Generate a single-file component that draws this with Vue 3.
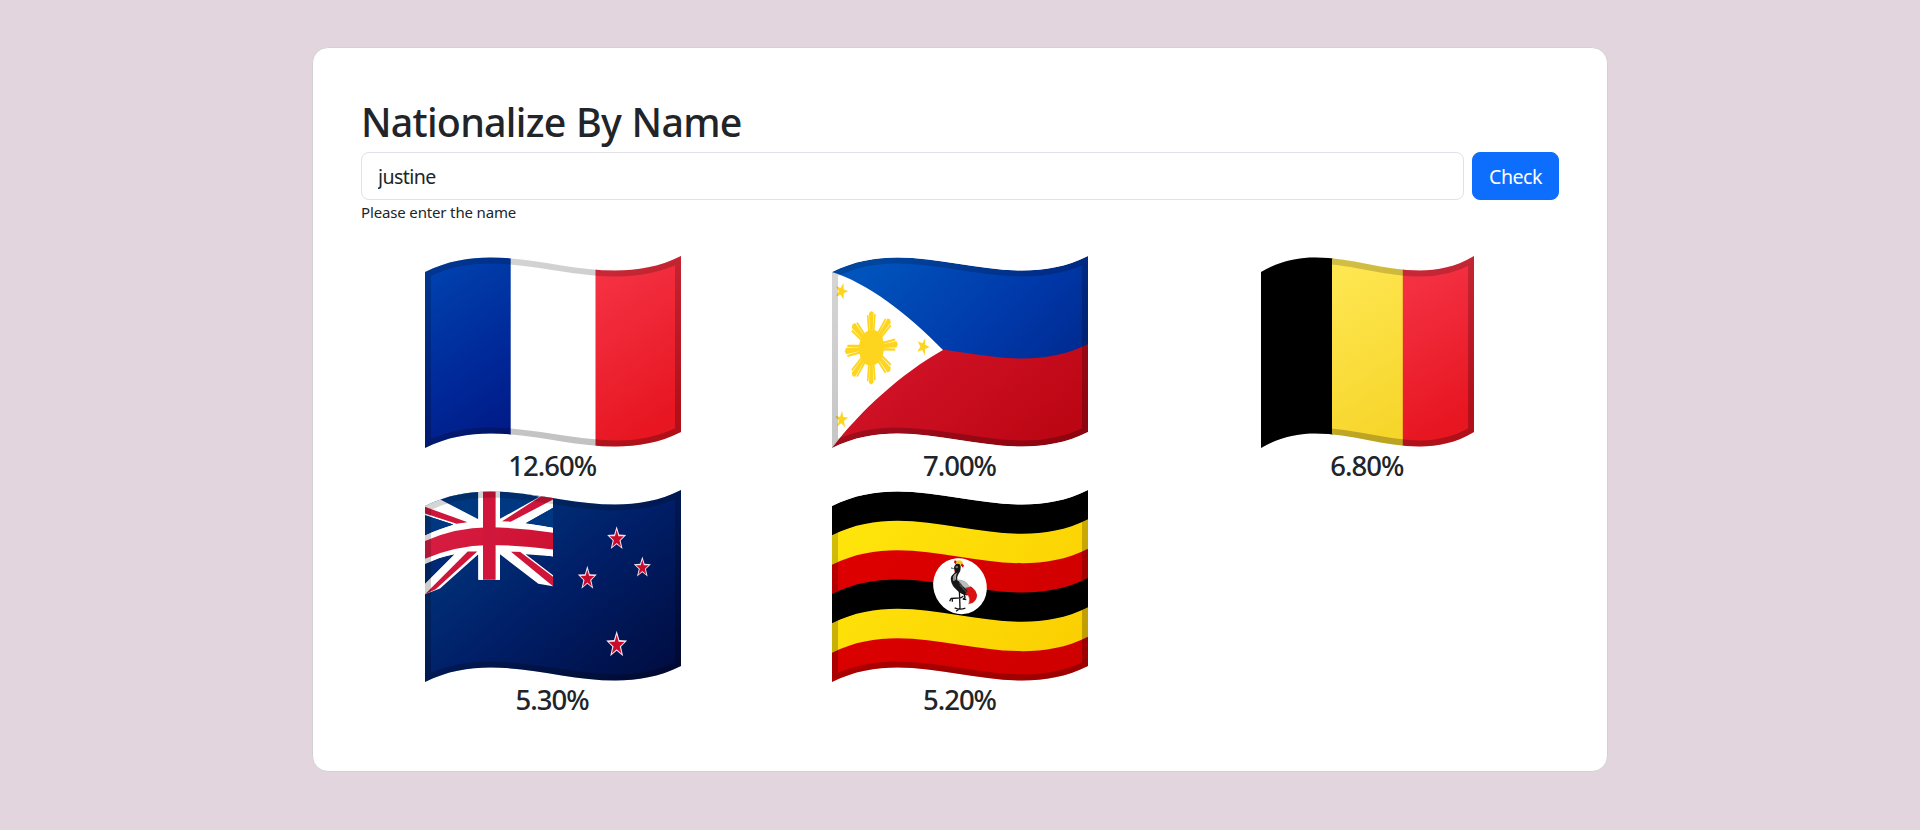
<script setup>
import { ref } from 'vue'

const name = ref('justine')

const results = [
  { code: 'fr', width: 256, percent: '12.60%' },
  { code: 'ph', width: 256, percent: '7.00%' },
  { code: 'be', width: 213, percent: '6.80%' },
  { code: 'nz', width: 256, percent: '5.30%' },
  { code: 'ug', width: 256, percent: '5.20%' },
]

const EDGE = 176

// A band of the waving cloth: starts `top` below the upper edge, `height` tall.
function band(width, top, height, x0 = 0) {
  const a = width / 3
  const b = (width * 2) / 3
  const bottom = top + height
  return `M${x0} ${16 + top}C${x0 + a} ${top - 26.7} ${x0 + b} ${42.7 + top} ${x0 + width} ${top}` +
    `V${bottom}C${x0 + b} ${42.7 + bottom} ${x0 + a} ${bottom - 26.7} ${x0} ${16 + bottom}Z`
}

function star(cx, cy, rx, ry, turn = 0, inner = 0.4) {
  const points = []
  for (let i = 0; i < 10; i++) {
    const angle = ((i * 36 + turn - 90) * Math.PI) / 180
    const r = i % 2 ? inner : 1
    points.push(`${(cx + Math.cos(angle) * r * rx).toFixed(2)},${(cy + Math.sin(angle) * r * ry).toFixed(2)}`)
  }
  return points.join(' ')
}

const ugandaBands = ['#000', 'url(#ug-yellow)', 'url(#ug-red)', '#000', 'url(#ug-yellow)', 'url(#ug-red)']
const southernCross = [
  [605, 176, 30, 38],
  [517, 295, 30, 38],
  [682, 262, 27, 33],
  [605, 494, 33, 42],
]
const rays = [0, 45, 90, 135, 180, 225, 270, 315]
</script>

<template>
  <main class="page">
    <section class="card">
      <h1 class="title">Nationalize By Name</h1>
      <form class="search" @submit.prevent>
        <input v-model="name" class="field" type="text" aria-label="Name" />
        <button class="check" type="submit">Check</button>
      </form>
      <div class="hint">Please enter the name</div>

      <div class="results">
        <div v-for="item in results" :key="item.code" class="result">
          <svg class="flag" :width="item.width" height="192" :viewBox="`0 0 ${item.width} 192`">
            <defs>
              <clipPath :id="item.code + '-cloth'"><path :d="band(item.width, 0, EDGE)" /></clipPath>
              <linearGradient :id="item.code + '-edge'" x1="0" y1="0" x2="0.5" y2="1">
                <stop offset="0" stop-color="#000" stop-opacity="0.16" />
                <stop offset="1" stop-color="#000" stop-opacity="0.24" />
              </linearGradient>
            </defs>
            <g :clip-path="`url(#${item.code}-cloth)`">
              <template v-if="item.code === 'fr'">
                <defs>
                  <linearGradient id="fr-blue" gradientUnits="userSpaceOnUse" x1="2" y1="30" x2="95" y2="165">
                    <stop offset="0" stop-color="#003fac" />
                    <stop offset="0.55" stop-color="#002999" />
                    <stop offset="1" stop-color="#001b88" />
                  </linearGradient>
                  <linearGradient id="fr-red" gradientUnits="userSpaceOnUse" x1="165" y1="30" x2="250" y2="155">
                    <stop offset="0" stop-color="#f43143" />
                    <stop offset="1" stop-color="#e71621" />
                  </linearGradient>
                </defs>
                <rect width="86" height="192" fill="url(#fr-blue)" />
                <rect x="85.7" width="85" height="192" fill="#fff" />
                <rect x="170.5" width="86" height="192" fill="url(#fr-red)" />
              </template>

              <template v-else-if="item.code === 'ph'">
                <defs>
                  <linearGradient id="ph-blue" gradientUnits="userSpaceOnUse" x1="50" y1="-10" x2="215" y2="140">
                    <stop offset="0" stop-color="#0054bd" />
                    <stop offset="0.6" stop-color="#0039aa" />
                    <stop offset="1" stop-color="#002a90" />
                  </linearGradient>
                  <linearGradient id="ph-red" gradientUnits="userSpaceOnUse" x1="100" y1="80" x2="200" y2="200">
                    <stop offset="0" stop-color="#d01226" />
                    <stop offset="1" stop-color="#bc0614" />
                  </linearGradient>
                </defs>
                <path :d="band(256, 0, 90)" fill="url(#ph-blue)" />
                <path :d="band(256, 88, 88)" fill="url(#ph-red)" />
                <path d="M0 16C35 27 75 57 111 94C70 117 29 154 0 192Z" fill="#fff" />
                <g fill="#fdd51f">
                  <g transform="matrix(26 -3.5 0 36 39.3 91.7)">
                    <g v-for="angle in rays" :key="angle" :transform="`rotate(${angle})`">
                      <path d="M.4-.05L.97-.09L1.02 0L.97.09L.4.05Z" />
                      <path d="M.4-.12L.91-.17L.93-.11L.4-.05Z" />
                      <path d="M.4.12L.91.17L.93.11L.4.05Z" />
                    </g>
                  </g>
                  <ellipse cx="39.5" cy="91.7" rx="12.6" ry="18" transform="rotate(4 39.5 91.7)" />
                  <polygon :points="star(9.5, 35.3, 6.7, 8.8, 18)" />
                  <polygon :points="star(91, 90.7, 6.7, 9, 20)" />
                  <polygon :points="star(9.5, 163.7, 6.7, 9, 4)" />
                </g>
              </template>

              <template v-else-if="item.code === 'be'">
                <defs>
                  <linearGradient id="be-yellow" gradientUnits="userSpaceOnUse" x1="65" y1="30" x2="145" y2="160">
                    <stop offset="0" stop-color="#fee650" />
                    <stop offset="1" stop-color="#f7d62c" />
                  </linearGradient>
                  <linearGradient id="be-red" gradientUnits="userSpaceOnUse" x1="137" y1="30" x2="210" y2="155">
                    <stop offset="0" stop-color="#f43143" />
                    <stop offset="1" stop-color="#e71621" />
                  </linearGradient>
                </defs>
                <rect width="72" height="192" fill="#000" />
                <rect x="71" width="71" height="192" fill="url(#be-yellow)" />
                <rect x="141.8" width="72" height="192" fill="url(#be-red)" />
              </template>

              <template v-else-if="item.code === 'nz'">
                <defs>
                  <linearGradient id="nz-blue" gradientUnits="userSpaceOnUse" x1="40" y1="-5" x2="215" y2="205">
                    <stop offset="0" stop-color="#003a80" />
                    <stop offset="0.5" stop-color="#001f68" />
                    <stop offset="1" stop-color="#000d42" />
                  </linearGradient>
                  <linearGradient id="nz-red" gradientUnits="userSpaceOnUse" x1="0" y1="20" x2="128" y2="80">
                    <stop offset="0" stop-color="#d91e45" />
                    <stop offset="1" stop-color="#cb1030" />
                  </linearGradient>
                </defs>
                <rect width="256" height="192" fill="url(#nz-blue)" />
                <g transform="translate(-10 -9.8) scale(.33333)">
                  <path
                    fill="#fff"
                    d="M30 20H414V83L332 129L414 142V228L332 222L414 285V318L370 311L255 222V299H190V222L75 325L30 342V310L117 223L30 251V165L115 133L30 105Z"
                  />
                  <path
                    fill="#003781"
                    d="M76 58C108 44 150 35 190 33V117ZM255 33Q315 36 374 50L255 116ZM30 105L115 133Q70 145 30 166ZM414 83L332 129L414 142Z"
                  />
                  <path
                    fill="#002b74"
                    d="M30 251Q70 230 117 223L30 310Z"
                  />
                  <path
                    fill="#cf1539"
                    d="M30 80L158 126L125 131L30 100ZM414 49L414 58L287 125H259L378 48ZM187 214L62 327L30 342L158 214ZM288 215H315L414 290V318Z"
                  />
                </g>
                <path d="M0 45.4Q30 31 64 31Q94 31 128 38V66.4Q94 60 64 59Q30 60 0 74Z" fill="#fff" />
                <rect x="53.4" y="0" width="21.6" height="89.8" fill="#fff" />
                <path d="M0 51Q30 37.4 64 37.2Q94 37.6 128 42.7V59.4Q94 55 64 54.9Q30 55.6 0 68.7Z" fill="url(#nz-red)" />
                <rect x="58" y="0" width="12.6" height="89.8" fill="#d0173b" />
                <g transform="translate(-10 -9.8) scale(.33333)">
                  <template v-for="[cx, cy, rx, ry] in southernCross" :key="cx + cy">
                    <polygon :points="star(cx, cy, rx, ry, 0, 0.42)" fill="#eee4ef" />
                    <polygon :points="star(cx, cy + 1, rx * 0.74, ry * 0.74, 0, 0.4)" fill="#ca0c2c" />
                  </template>
                </g>
              </template>

              <template v-else>
                <defs>
                  <linearGradient id="ug-yellow" gradientUnits="userSpaceOnUse" x1="20" y1="10" x2="230" y2="180">
                    <stop offset="0" stop-color="#ffe60b" />
                    <stop offset="1" stop-color="#fbcf02" />
                  </linearGradient>
                  <linearGradient id="ug-red" gradientUnits="userSpaceOnUse" x1="20" y1="10" x2="230" y2="180">
                    <stop offset="0" stop-color="#e00000" />
                    <stop offset="1" stop-color="#cf0000" />
                  </linearGradient>
                </defs>
                <path
                  v-for="(fill, i) in ugandaBands"
                  :key="i"
                  :d="band(256, i * 29.33, 30)"
                  :fill="fill"
                />
                <ellipse cx="128" cy="96.2" rx="26.4" ry="28.4" fill="#fff" transform="rotate(-28 128 96.2)" />
                <g transform="translate(88 55.2) scale(.33333)" stroke-linejoin="round">
                  <path d="M104 45L102 52L108 57L112 48Z" fill="#d90000" />
                  <path d="M109 48Q118 42 127 49L129 56L118 60L109 55Z" fill="#f5cc12" />
                  <path d="M125 55L132 60L129 68L122 60Z" fill="#d90000" />
                  <path d="M93 67L103 69L103 71L93 70Z" fill="#333" />
                  <path d="M103 71L108 78L104 80Z" fill="#d90000" />
                  <path d="M102 68Q104 56 113 56Q123 56 122 68Q123 79 115 87Q110 94 112 105Q127 112 142 131Q148 146 141 151Q124 148 111 135Q95 122 93 107Q90 94 101 86Q108 79 103 73Z" fill="#151515" />
                  <path d="M106 64L113 62L114 68L108 69Z" fill="#777" />
                  <path d="M99 94Q103 86 111 83Q107 92 108 103L100 108Z" fill="#a7a7a7" />
                  <path d="M100 94L96 107M104 91L103 107" stroke="#555" fill="none" />
                  <path d="M114 104Q136 105 146 121L154 130L143 132L129 124Z" fill="#bdbdbd" stroke="#777" />
                  <path d="M117 112L140 133M119 119L139 140" stroke="#888" stroke-width="2" />
                  <path d="M139 128L149 126L153 124Q168 135 171 151Q169 165 158 173L146 176Q152 162 145 151L135 145L142 140Z" fill="#dc1212" stroke="#8b1111" />
                  <path d="M118 137L119 157L120 190M132 145L135 157L129 163M130 153L122 158L93 160L89 168M97 160L97 170M104 188Q120 195 136 189M120 190L108 198M128 162L139 163" stroke="#111" stroke-width="4" fill="none" />
                </g>
              </template>

              <path
                :d="band(item.width, 0, EDGE)"
                fill="none"
                :stroke="`url(#${item.code}-edge)`"
                stroke-width="12"
              />
            </g>
          </svg>
          <h3 class="percent">{{ item.percent }}</h3>
        </div>
      </div>
    </section>
  </main>
</template>

<style>
html,
body {
  margin: 0;
  background: #e2d5dd;
}
</style>

<style scoped>
.page {
  box-sizing: border-box;
  min-height: 830px;
  padding-top: 47px;
  background: #e2d5dd;
  color: #212529;
  font-family: "Noto Sans", "Open Sans", sans-serif;
}

.card {
  box-sizing: border-box;
  width: 1296px;
  height: 725px;
  margin: 0 auto;
  padding: 48px;
  background: #fff;
  border: 1px solid #d2d2d4;
  border-radius: 16px;
}

.title {
  margin: 0;
  padding-top: 2px;
  height: 54px;
  font-size: 39.4px;
  font-weight: 550;
  line-height: 48px;
  letter-spacing: -0.75px;
  word-spacing: 1px;
  white-space: nowrap;
}

.search {
  display: flex;
  gap: 8px;
}

.field,
.check {
  box-sizing: border-box;
  height: 48px;
  padding: 0 16px;
  border-radius: 8px;
  font-family: inherit;
  font-size: 19.6px;
  line-height: 30px;
}

.field {
  flex: 1;
  min-width: 0;
  color: #212529;
  background: #fff;
  border: 1px solid #dee2e6;
  letter-spacing: -0.6px;
  outline: none;
}

.check {
  width: 87px;
  padding-top: 2px;
  color: #fff;
  background: #0d6efd;
  border: 1px solid #0d6efd;
  letter-spacing: -0.5px;
}

.hint {
  height: 56px;
  box-sizing: border-box;
  padding-top: 2px;
  font-size: 15px;
  line-height: 21px;
  letter-spacing: -0.15px;
}

.results {
  display: grid;
  grid-template-columns: repeat(3, 1fr);
  margin: 0 -12px;
}

.result {
  display: flex;
  flex-direction: column;
  align-items: center;
  height: 233.6px;
}

.flag {
  display: block;
  flex: none;
}

.percent {
  margin: 0;
  padding: 1px 1px 0 0;
  font-size: 27.5px;
  font-weight: 500;
  line-height: 33.6px;
  letter-spacing: -1px;
}
</style>
